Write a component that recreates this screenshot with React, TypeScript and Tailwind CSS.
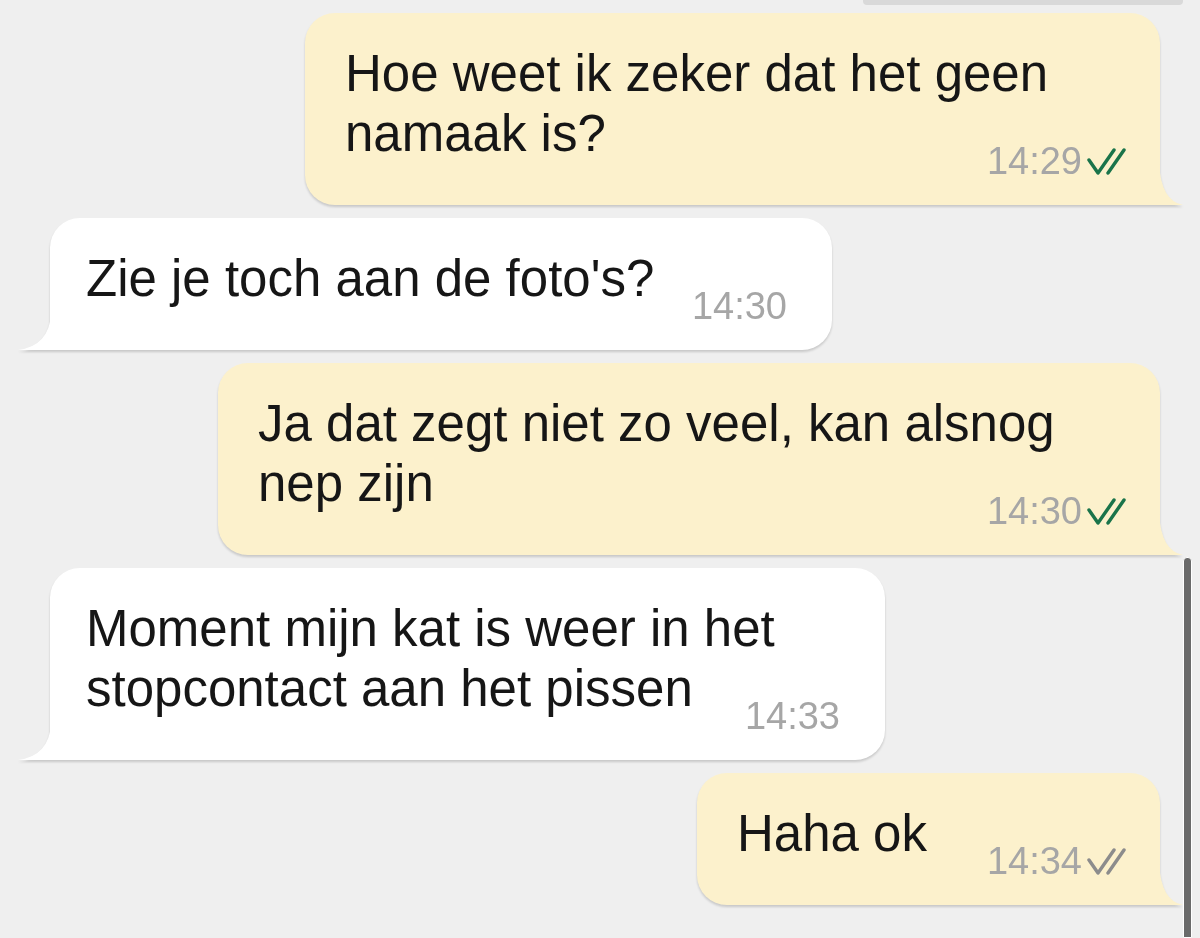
import React from "react";

type Msg = {
  id: number;
  out: boolean;
  lines: string[];
  time: string;
  width: string;
  read?: boolean;
};

const messages: Msg[] = [
  { id: 1, out: true, lines: ["Hoe weet ik zeker dat het geen", "namaak is?"], time: "14:29", width: "w-[855px]", read: true },
  { id: 2, out: false, lines: ["Zie je toch aan de foto's?"], time: "14:30", width: "w-[782px]" },
  { id: 3, out: true, lines: ["Ja dat zegt niet zo veel, kan alsnog", "nep zijn"], time: "14:30", width: "w-[942px]", read: true },
  { id: 4, out: false, lines: ["Moment mijn kat is weer in het", "stopcontact aan het pissen"], time: "14:33", width: "w-[835px]" },
  { id: 5, out: true, lines: ["Haha ok"], time: "14:34", width: "w-[463px]", read: false },
];

const Ticks = ({ read }: { read?: boolean }) => (
  <svg width="44" height="27" viewBox="0 0 44 27" fill="none" className="shrink-0">
    <path
      d="M3 12 L12 25 L28 2 M22 25 L38 2"
      stroke={read ? "#1a744a" : "#8c8c8c"}
      strokeWidth="3.4"
      strokeLinecap="round"
      strokeLinejoin="round"
    />
  </svg>
);

const Bubble = ({ m }: { m: Msg }) => {
  const bg = m.out ? "bg-[#fcf1cc]" : "bg-white";
  const fill = m.out ? "#fcf1cc" : "#ffffff";
  const last = m.lines[m.lines.length - 1];
  return (
    <div
      className={`relative ${m.width} ${bg} rounded-[30px] ${
        m.out ? "rounded-br-none pl-[40px] pr-[30px]" : "rounded-bl-none pl-[36px] pr-[45px]"
      } pt-[31px] pb-[24px] text-[51px] leading-[60px] text-[#161616] drop-shadow-[0_2px_1px_rgba(0,0,0,0.16)]`}
    >
      {m.out ? (
        <svg width="24" height="42" viewBox="0 0 24 42" className="absolute bottom-0 right-[-23px]">
          <path d="M0 0 Q2 38 24 42 L0 42 Z" fill={fill} />
        </svg>
      ) : (
        <svg width="33" height="36" viewBox="0 0 33 36" className="absolute bottom-0 left-[-32px]">
          <path d="M33 0 Q31 32 0 36 L33 36 Z" fill={fill} />
        </svg>
      )}
      {m.lines.slice(0, -1).map((l) => (
        <div key={l}>{l}</div>
      ))}
      <div className="flex items-start justify-between gap-[30px]">
        <span>{last}</span>
        <div className="mt-[37px] flex h-[40px] items-center gap-[4px]">
          <span className="text-[38px] leading-[40px] text-[#a6a6a6]">{m.time}</span>
          {m.out && <Ticks read={m.read} />}
        </div>
      </div>
    </div>
  );
};

export default function App() {
  return (
    <div
      className="relative h-[938px] w-[1200px] overflow-hidden bg-[#efefef]"
      style={{ fontFamily: '"Liberation Sans", Arial, sans-serif' }}
    >
      <div className="ml-[863px] h-[5px] w-[320px] rounded-b-[4px] bg-[#d9d9d9]" />
      <div className="mt-[8px] flex flex-col gap-[13px] pl-[50px] pr-[40px]">
        {messages.map((m) => (
          <div key={m.id} className={`flex ${m.out ? "justify-end" : "justify-start"}`}>
            <Bubble m={m} />
          </div>
        ))}
      </div>
      <div className="absolute right-[8px] top-[557px] bottom-0 w-[9px] rounded-t-[4px] border-[1.5px] border-white bg-[#6a6a6a]" />
    </div>
  );
}
